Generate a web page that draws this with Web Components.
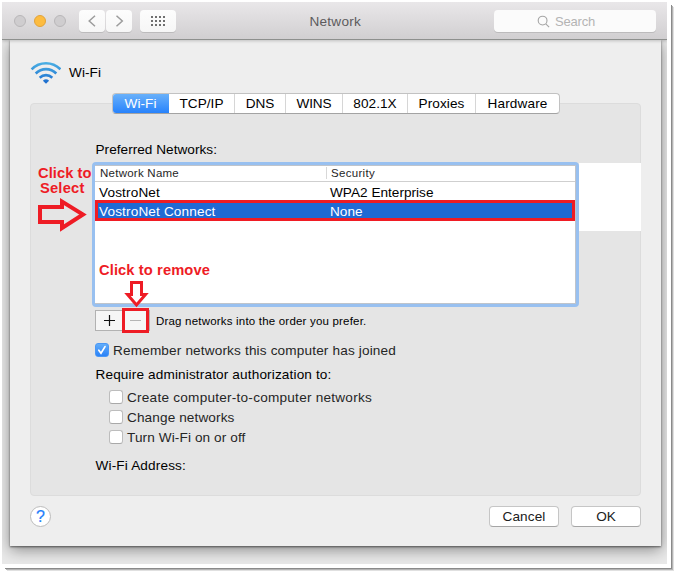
<!DOCTYPE html>
<html lang="en"><head><meta charset="utf-8"><title>Network</title>
<style>
html,body{margin:0;width:676px;height:573px;overflow:hidden;background:#fff}
body{font:13.6px/15px "Liberation Sans",Arial,sans-serif;color:#000}
</style></head><body>
<network-window></network-window>
<script>
const define=(name,html,setup)=>customElements.define(name,class extends HTMLElement{
  connectedCallback(){
    if(this.shadowRoot)return;
    this.attachShadow({mode:'open'}).innerHTML=html;
    if(setup)setup(this,this.shadowRoot);
  }
});

// One line of text, tracked so that it spans the width given in "w".
define('ui-text',`<style>:host{display:block;white-space:nowrap;flex:none}span{display:inline-block;vertical-align:top}</style><span><slot></slot></span>`,(el,root)=>{
  const s=root.querySelector('span'),w=+el.getAttribute('w'),n=el.textContent.length;
  if(w){const d=(w-s.getBoundingClientRect().width)/n;s.style.letterSpacing=d.toFixed(3)+'px';el.style.width=w+'px';}
});

define('tool-button',`<style>:host{display:flex;width:26px;height:22px;flex:none;align-items:center;justify-content:center;background:linear-gradient(#fdfdfd,#f6f6f6);border-radius:4px;box-shadow:0 1px 0 #bcbbbc;box-sizing:border-box}</style><slot></slot>`);

define('title-bar',`<style>
:host{display:flex;height:38px;box-sizing:border-box;padding:8px 11px 7px 12px;align-items:flex-start;background:linear-gradient(#e9e7e9,#d1cfd1);border-bottom:1px solid #8e908e;position:relative;z-index:2;box-shadow:0 1px 3px #0003}
.lights{display:flex;gap:8px;padding-top:5px}
i{width:12px;height:12px;box-sizing:border-box;border:1px solid #b9b7b9;border-radius:50%;background:#cfcdcf}
i.min{background:#fdbc40;border-color:#e2a33a}
.nav{display:flex;gap:1px;margin-left:13px}
.all{width:36px;margin-left:8px}
.title{color:#5d5b5d;margin:4px 0 0 133.5px}
.search{display:flex;width:162px;height:22px;margin-left:auto;background:#fbfbfb;border-radius:4px;box-shadow:0 1px 0 #bcbbbc;color:#b4b4b4}
.search svg{margin:5px 5px 0 43px}.search ui-text{margin-top:4px;font-size:13px}
</style>
<div class="lights"><i></i><i class="min"></i><i></i></div>
<div class="nav"><tool-button><svg width="10" height="14" fill="none" stroke="#9c9c9c" stroke-width="1.5"><path d="M8 1.8 2.2 7 8 12.2"/></svg></tool-button><tool-button><svg width="10" height="14" fill="none" stroke="#9c9c9c" stroke-width="1.5"><path d="M2.5 1.8 8.3 7 2.5 12.2"/></svg></tool-button></div>
<tool-button class="all"><svg width="16" height="10" fill="none" stroke="#6f6f6f" stroke-width="2" stroke-dasharray="2 2"><path d="M1 1h14M1 5h14M1 9h14"/></svg></tool-button>
<ui-text class="title" w="51.5">Network</ui-text>
<div class="search"><svg width="13" height="13" fill="none" stroke="#a5a5a5" stroke-width="1.1"><circle cx="5.6" cy="5.6" r="4.4"/><path d="m8.8 8.8 3.3 3.3"/></svg><ui-text w="40">Search</ui-text></div>`);

define('tab-strip',`<style>
:host{display:flex;width:448px;height:21px;box-sizing:border-box;border:1px solid #c2c2c2;border-bottom-color:#a3a3a3;border-radius:4px;background:#fff;overflow:hidden}
div{box-sizing:border-box;display:flex;justify-content:center;align-items:flex-start;padding-top:2px;border-right:1px solid #d6d6d6;flex:none;height:19px}
div.on{color:#fff;background:linear-gradient(#6cb3fa,#2480fc);margin:-1px 0 -1px -1px;padding-top:3px;height:21px;border-right:0}
div:last-child{border:0}
</style>
<div class="on" style="width:57px"><ui-text w="32">Wi-Fi</ui-text></div><div style="width:66px"><ui-text w="44">TCP/IP</ui-text></div><div style="width:51px"><ui-text w="28.5">DNS</ui-text></div><div style="width:57px"><ui-text w="35">WINS</ui-text></div><div style="width:65px"><ui-text w="43.5">802.1X</ui-text></div><div style="width:68px"><ui-text w="46">Proxies</ui-text></div><div style="width:83px"><ui-text w="60">Hardware</ui-text></div>`);

define('check-box',`<style>
:host{display:flex;height:20px;gap:4px;color:#262626}
i{width:14px;height:14px;box-sizing:border-box;border:1px solid #bdbdbd;border-bottom-color:#a9a9a9;border-radius:3px;background:#fff;margin-top:3px;flex:none}
svg{display:none}
:host([checked]) i{background:linear-gradient(#62adf9,#2a82f8);border-color:#4a97f5}
:host([checked]) svg{display:block;margin:-1px}
::slotted(*){margin-top:3px}
</style><i><svg width="14" height="14" fill="none" stroke="#fff" stroke-width="1.7" stroke-linecap="round"><path d="m3.8 7.2 2.2 3 4-6.6"/></svg></i><slot></slot>`);

define('network-list',`<style>
:host{display:block;width:487px;height:145px;box-sizing:border-box;border:3px solid #98c0f0;border-radius:4px;background:#98c0f0}
.in{height:139px;box-sizing:border-box;border:solid #bfc4cb;border-width:1px 1px 1px 0;background:#fff}
.h,.r{display:grid;grid-template-columns:231px 1fr;box-sizing:border-box}
.h{font-size:11.5px;line-height:12px;height:16px;color:#262626;border-bottom:1px solid #cfcfcf;padding:1px 0 0 5px}
.h ui-text+ui-text{border-left:1px solid #d8d8d8;margin:0 0 2px -5px;padding-left:4px}
.r{height:18px;padding:3px 0 0 4px}
.r.sel{grid-template-columns:231px 1fr;background:#1f6ad4;color:#fff;height:21px;padding:1px 0 0 1px;border:3px solid #f01c24}
</style><div class="in">
<div class="h"><ui-text w="79">Network Name</ui-text><ui-text w="44">Security</ui-text></div>
<div class="r"><ui-text w="61">VostroNet</ui-text><ui-text w="103.5">WPA2 Enterprise</ui-text></div>
<div class="r sel"><ui-text w="116.5">VostroNet Connect</ui-text><ui-text w="32.5">None</ui-text></div></div>`);

define('push-button',`<style>:host{display:flex;width:70px;height:21px;box-sizing:border-box;border:1px solid #c6c6c6;border-bottom-color:#a5a5a5;border-radius:4px;background:#fff;justify-content:center;padding-top:2px;color:#202020}</style><slot></slot>`);

// Red call-outs lying over the dialog.
define('call-outs',`<style>
:host{position:absolute;inset:0;z-index:5;color:#ee1c25;font-weight:bold;font-size:14.7px;line-height:16px;pointer-events:none}
ui-text,svg,.box{position:absolute}
.box{left:122px;top:308px;width:27px;height:25px;box-sizing:border-box;border:3px solid #ee1c25}
</style>
<ui-text w="53.500" style="left:38px;top:165px">Click to</ui-text>
<ui-text w="44.500" style="left:40px;top:180px">Select</ui-text>
<svg style="left:36px;top:196px" width="52" height="38" fill="none" stroke="#ee1c25" stroke-width="4"><path d="M4 11h22V5.500L47 18.500 26 32V26H4z"/></svg>
<ui-text w="111" style="left:99px;top:262px">Click to remove</ui-text>
<svg style="left:123px;top:279px" width="28" height="30" fill="none" stroke="#ee1c25" stroke-width="3"><path d="M8.500 3.500H18.500V15.500H22.500L13.500 26 4.500 15.500H8.500z"/></svg>
<div class="box"></div>`);

define('network-sheet',`<style>
:host{display:block;width:651px;height:506px;margin-left:8px;box-sizing:border-box;padding:21px 20px 0;background:#eee;box-shadow:0 1px 2px #0008,0 4px 14px #0006}
.head{display:flex;height:42px;gap:8px}
.head ui-text{margin-top:4px}
.panel{height:393px;box-sizing:border-box;border:1px solid #dcdcdc;border-radius:4px;background:#e5e5e5;padding-left:64px;position:relative}
tab-strip{margin:-11px 0 0 17px}
.pref{margin:28px 0 0 .5px}
.lists{display:flex;margin:5px 0 0 -3px;align-items:flex-start}
.blank{flex:1;height:68px;margin-top:1px;background:#fff;margin-right:-1px}
.edit{display:flex;margin-top:3px;height:21px}
.edit b{width:28px;height:21px;box-sizing:border-box;border:1px solid #b2b2b2;background:#f6f6f6;margin-right:-1px}
.edit svg{display:block}
.edit ui-text{font-size:11.5px;line-height:12px;margin:5px 0 0 7px}
.remember{margin-top:9px}
.sub{margin:5px 0 0 14px}
.foot{display:flex;margin-top:10px;height:21px}
.help{width:21px;height:21px;box-sizing:border-box;border:1px solid #bcbcbc;border-radius:50%;background:#fff;color:#237efb;font-size:16px;line-height:19px;text-align:center;margin-right:auto;-webkit-text-stroke:.2px #237efb}
push-button+push-button{margin-left:12px}
</style>
<div class="head"><svg width="31" height="24" viewBox="0 0 31 24"><defs><linearGradient id="g" x2="0" y2="24" gradientUnits="userSpaceOnUse"><stop stop-color="#4eb4e5"/><stop offset="1" stop-color="#1766cc"/></linearGradient></defs><g fill="none" stroke="url(#g)" stroke-width="2.6"><path d="M1.600 8.300C9.500.2 22.500.2 30.400 8.300"/><path d="M5.700 12.500C11.500 6.700 20.500 6.700 26.300 12.500"/><path d="M9.700 16.700C13.300 13.300 18.700 13.300 22.300 16.700"/></g><path fill="url(#g)" d="M13.200 19.300c1.700-1.500 3.900-1.500 5.600 0v.6L16 22.800l-2.800-2.900z"/></svg><ui-text w="32">Wi-Fi</ui-text></div>
<div class="panel"><tab-strip></tab-strip>
<ui-text class="pref" w="121.500">Preferred Networks:</ui-text>
<div class="lists"><network-list></network-list><div class="blank"></div></div>
<div class="edit"><b><svg width="26" height="19" stroke="#111" stroke-width="1.2"><path d="M8 9.500h11M13.500 4v11"/></svg></b><b><svg width="26" height="19" stroke="#b5b5b5"><path d="M7 9.500h11"/></svg></b><ui-text w="210.500">Drag networks into the order you prefer.</ui-text></div>
<check-box class="remember" checked><ui-text w="283">Remember networks this computer has joined</ui-text></check-box>
<ui-text w="236" style="margin:7px 0 0 .5px">Require administrator authorization to:</ui-text>
<div class="sub"><check-box><ui-text w="245">Create computer-to-computer networks</ui-text></check-box><check-box><ui-text w="107.500">Change networks</ui-text></check-box><check-box><ui-text w="118.500">Turn Wi-Fi on or off</ui-text></check-box></div>
<ui-text w="90.500" style="margin:11px 0 0 .5px">Wi-Fi Address:</ui-text>
</div>
<div class="foot"><div class="help">?</div><push-button><ui-text w="43">Cancel</ui-text></push-button><push-button><ui-text w="19.500">OK</ui-text></push-button></div>`);

define('network-window',`<style>
:host{display:block;position:relative;width:671px;height:568px;background:#fff;box-sizing:border-box;padding:2px 0 0 2px}
.win{width:665px;height:562px;background:#e9e9e9;overflow:hidden}
.edge{position:absolute;right:-3px;top:5px;bottom:-3px;left:5px;border:solid #8a8a8a;border-width:0 1px 1px 0;margin:0 2px 2px 0;box-shadow:1px 1px 0 #b4b4b4,2px 2px 0 #e0e0e0}
</style><div class="edge"></div><div class="win"><title-bar></title-bar><network-sheet></network-sheet></div><call-outs></call-outs>`);
</script></body></html>
